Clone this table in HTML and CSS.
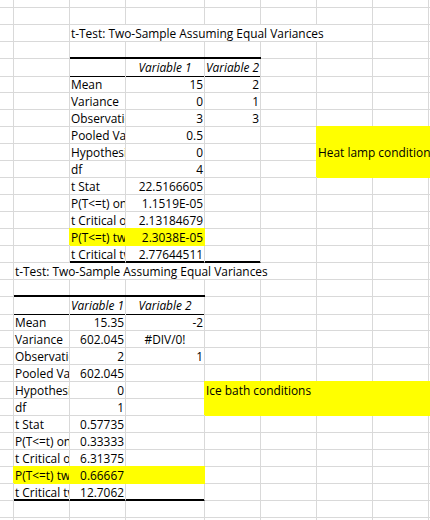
FILE: index.html
```html
<!DOCTYPE html>
<html>
<head>
<meta charset="utf-8">
<link rel="stylesheet" href="styles.css">
</head>
<body>
<div class="sheet">
<div class="row first"><div></div><div></div><div></div><div></div><div></div><div></div><div></div><div></div><div></div></div>
<div class="row"><div></div><div></div><div></div><div></div><div></div><div></div><div></div><div></div><div></div></div>
<div class="row"><div></div><div></div><div class="span5 l">t-Test: Two-Sample Assuming Equal Variances</div><div></div><div></div></div>
<div class="row"><div></div><div></div><div></div><div></div><div></div><div></div><div></div><div></div><div></div></div>
<div class="row"><div></div><div></div><div class="tt hb"></div><div class="h tt hb">Variable 1</div><div class="h tt hb">Variable 2</div><div></div><div></div><div></div><div></div></div>
<div class="row"><div></div><div></div><div class="l">Mean</div><div class="n">15</div><div class="n">2</div><div></div><div></div><div></div><div></div></div>
<div class="row"><div></div><div></div><div class="l">Variance</div><div class="n">0</div><div class="n">1</div><div></div><div></div><div></div><div></div></div>
<div class="row"><div></div><div></div><div class="l">Observations</div><div class="n">3</div><div class="n">3</div><div></div><div></div><div></div><div></div></div>
<div class="row"><div></div><div></div><div class="l">Pooled Variance</div><div class="n">0.5</div><div></div><div></div><div class="y span3"></div></div>
<div class="row"><div></div><div></div><div class="l">Hypothesized Mean Difference</div><div class="n">0</div><div></div><div></div><div class="y span3 l">Heat lamp conditions</div></div>
<div class="row"><div></div><div></div><div class="l">df</div><div class="n">4</div><div></div><div></div><div class="y span3"></div></div>
<div class="row"><div></div><div></div><div class="l">t Stat</div><div class="n">22.5166605</div><div></div><div></div><div></div><div></div><div></div></div>
<div class="row"><div></div><div></div><div class="l">P(T&lt;=t) one-tail</div><div class="n">1.1519E-05</div><div></div><div></div><div></div><div></div><div></div></div>
<div class="row"><div></div><div></div><div class="l">t Critical one-tail</div><div class="n">2.13184679</div><div></div><div></div><div></div><div></div><div></div></div>
<div class="row"><div></div><div></div><div class="l y">P(T&lt;=t) two-tail</div><div class="n y">2.3038E-05</div><div></div><div></div><div></div><div></div><div></div></div>
<div class="row"><div></div><div></div><div class="l bb">t Critical two-tail</div><div class="n bb">2.77644511</div><div class="bb"></div><div></div><div></div><div></div><div></div></div>
<div class="row"><div></div><div class="span5 l">t-Test: Two-Sample Assuming Equal Variances</div><div></div><div></div><div></div></div>
<div class="row"><div></div><div></div><div></div><div></div><div></div><div></div><div></div><div></div><div></div></div>
<div class="row"><div></div><div class="tt hb"></div><div class="h tt hb">Variable 1</div><div class="h tt hb">Variable 2</div><div></div><div></div><div></div><div></div><div></div></div>
<div class="row"><div></div><div class="l">Mean</div><div class="n">15.35</div><div class="n">-2</div><div></div><div></div><div></div><div></div><div></div></div>
<div class="row"><div></div><div class="l">Variance</div><div class="n">602.045</div><div class="ctr">#DIV/0!</div><div></div><div></div><div></div><div></div><div></div></div>
<div class="row"><div></div><div class="l">Observations</div><div class="n">2</div><div class="n">1</div><div></div><div></div><div></div><div></div><div></div></div>
<div class="row"><div></div><div class="l">Pooled Variance</div><div class="n">602.045</div><div></div><div></div><div></div><div></div><div></div><div></div></div>
<div class="row"><div></div><div class="l">Hypothesized Mean Difference</div><div class="n">0</div><div></div><div class="y span5 l">Ice bath conditions</div></div>
<div class="row"><div></div><div class="l">df</div><div class="n">1</div><div></div><div class="y span5"></div></div>
<div class="row"><div></div><div class="l">t Stat</div><div class="n">0.57735</div><div></div><div></div><div></div><div></div><div></div><div></div></div>
<div class="row"><div></div><div class="l">P(T&lt;=t) one-tail</div><div class="n">0.33333</div><div></div><div></div><div></div><div></div><div></div><div></div></div>
<div class="row"><div></div><div class="l">t Critical one-tail</div><div class="n">6.31375</div><div></div><div></div><div></div><div></div><div></div><div></div></div>
<div class="row"><div></div><div class="l y">P(T&lt;=t) two-tail</div><div class="n y">0.66667</div><div class="y"></div><div></div><div></div><div></div><div></div><div></div></div>
<div class="row"><div></div><div class="l bb">t Critical two-tail</div><div class="n bb">12.7062</div><div class="bb"></div><div></div><div></div><div></div><div></div><div></div></div>
<div class="row"><div></div><div></div><div></div><div></div><div></div><div></div><div></div><div></div><div></div></div>
<div class="row"><div></div><div></div><div></div><div></div><div></div><div></div><div></div><div></div><div></div></div>
</div>
</body>
</html>
```
FILE: styles.css
```css
html, body {
  margin: 0;
  padding: 0;
  background: #ffffff;
  overflow: hidden;
}
body {
  font-family: "Open Sans", "Noto Sans", sans-serif;
  font-size: 11.9px;
  color: #000000;
}
.sheet {
  width: 560px;
}
.row {
  display: grid;
  grid-template-columns: 14px 56px 56px 79px 56px 56px 56px 56px 131px;
  height: 17px;
}
.row.first {
  height: 8px;
}
.row > div {
  box-sizing: border-box;
  border-right: 1px solid #d9d9d9;
  border-bottom: 1px solid #d9d9d9;
  white-space: nowrap;
  overflow: hidden;
  line-height: 17px;
  min-width: 0;
}
.l {
  text-align: left;
  padding-left: 1px;
}
.n {
  text-align: right;
  padding-right: 1px;
}
.ctr {
  text-align: center;
}
.h {
  text-align: center;
  font-style: italic;
  overflow: visible !important;
}
.span3 {
  grid-column: span 3;
}
.span5 {
  grid-column: span 5;
}
.row > .tt {
  box-shadow: 0 -2px 0 #000000;
}
.row > .hb {
  border-bottom-color: #000000;
}
.row > .bb {
  border-bottom-color: #000000;
  box-shadow: inset 0 -1px 0 #000000;
}
.row > .y {
  background: #ffff00;
  border-right-color: #ffff00;
  border-bottom-color: #ffff00;
  box-shadow: -1px -1px 0 #ffff00, 0 -1px 0 #ffff00;
}
```
